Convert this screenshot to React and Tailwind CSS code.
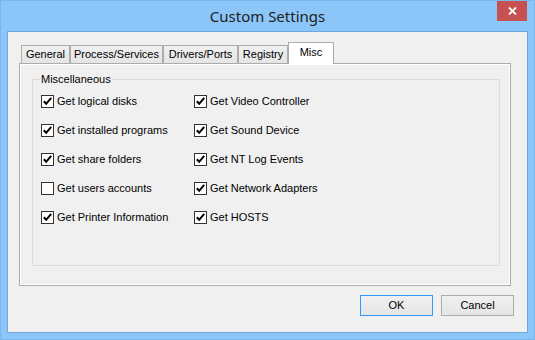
import React from "react";

const tabs = [
  { label: "General", w: "w-[49px]" },
  { label: "Process/Services", w: "w-[93px]" },
  { label: "Drivers/Ports", w: "w-[75px]" },
  { label: "Registry", w: "w-[50px]" },
];

const left = [
  { label: "Get logical disks", on: true },
  { label: "Get installed programs", on: true },
  { label: "Get share folders", on: true },
  { label: "Get users accounts", on: false },
  { label: "Get Printer Information", on: true },
];

const right = [
  { label: "Get Video Controller", on: true },
  { label: "Get Sound Device", on: true },
  { label: "Get NT Log Events", on: true },
  { label: "Get Network Adapters", on: true },
  { label: "Get HOSTS", on: true },
];

function Check({ label, on }) {
  return (
    <div className="flex items-center h-[29px]">
      <span className="w-[13px] h-[13px] border border-[#333333] bg-white flex items-center justify-center">
        {on && (
          <svg width="11" height="11" viewBox="0 0 11 11">
            <polyline points="1.8,5.2 4.2,7.8 9.2,1.8" fill="none" stroke="#000" strokeWidth="2" />
          </svg>
        )}
      </span>
      <span className="ml-[3px] text-black">{label}</span>
    </div>
  );
}

function Button({ children, primary }) {
  return (
    <button
      className={
        "w-[73px] h-[21px] bg-gradient-to-b from-[#f0f0f0] to-[#e5e5e5] text-black text-[11px] border " +
        (primary ? "border-[#3399ff]" : "border-[#acacac]")
      }
    >
      {children}
    </button>
  );
}

export default function App() {
  const rows = [];
  for (let i = 0; i < left.length; i++) {
    rows.push(<Check key={"l" + i} {...left[i]} />);
    rows.push(<Check key={"r" + i} {...right[i]} />);
  }

  return (
    <div className="w-[535px] h-[340px] bg-[#8cc5f7] border border-[#7cb6ec] flex flex-col font-['Liberation_Sans',Arial,sans-serif] text-[11px] leading-[13px]">
      {/* title bar */}
      <div className="h-[30px] grid grid-cols-[1fr_auto_1fr]">
        <div />
        <div className="self-center font-['Noto_Sans',sans-serif] text-[15px] leading-[20px] text-[#1e1e1e]">
          Custom Settings
        </div>
        <div className="flex justify-end items-start pr-[7px]">
          <div className="w-[30px] h-[20px] bg-[#c75050] flex items-center justify-center">
            <svg width="9" height="8" viewBox="0 0 9 8">
              <path d="M1 0.5 L8 7.5 M8 0.5 L1 7.5" stroke="#fff" strokeWidth="1.8" />
            </svg>
          </div>
        </div>
      </div>

      {/* client area */}
      <div className="mx-[6px] h-[302px] border border-[#6fa8df] bg-[#f0f0f0] flex flex-col">
        {/* tab strip */}
        <div className="mt-[10px] ml-[13px] h-[21px] flex items-end">
          {tabs.map((t) => (
            <div
              key={t.label}
              className={t.w + " h-[18px] border border-b-0 border-[#acacac] bg-gradient-to-b from-[#f0f0f0] to-[#e5e5e5] flex items-center justify-center text-black"}
            >
              {t.label}
            </div>
          ))}
          <div className="relative z-10 w-[46px] h-[22px] -mb-[1px] border border-b-0 border-[#acacac] bg-white flex items-center justify-center pb-[3px] text-black">
            Misc
          </div>
        </div>

        {/* tab page */}
        <div className="ml-[11px] w-[492px] h-[223px] border border-[#acacac] flex">
          <div className="flex-1 border border-white bg-[#f0f0f0]">
            <fieldset className="ml-[11px] mt-[8px] w-[468px] h-[193px] border border-[#dcdcdc] px-[7px] pt-[1px]">
              <legend className="px-[1px] text-black">Miscellaneous</legend>
              <div className="pl-[1px] grid grid-cols-[153px_1fr]">{rows}</div>
            </fieldset>
          </div>
        </div>

        {/* buttons */}
        <div className="mt-[9px] pr-[13px] flex justify-end gap-[8px]">
          <Button primary>OK</Button>
          <Button>Cancel</Button>
        </div>
      </div>
    </div>
  );
}
